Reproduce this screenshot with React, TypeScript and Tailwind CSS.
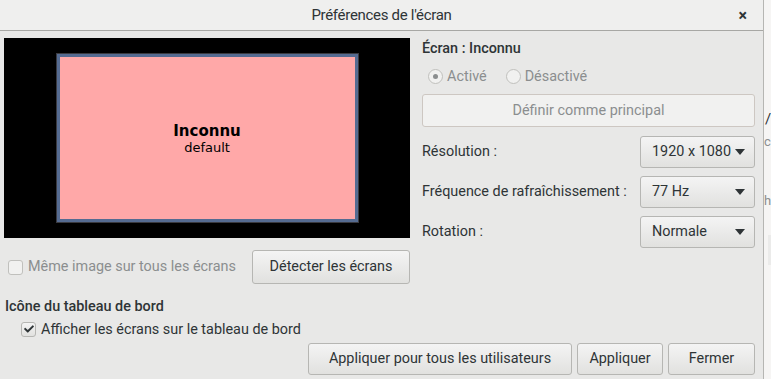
import { FaCheck } from 'react-icons/fa'

const font = { fontFamily: 'Roboto, "Noto Sans", sans-serif' }

function Combo({ value }: { value: string }) {
  return (
    <div className="flex h-[32px] w-[115px] items-center justify-between whitespace-nowrap rounded-[3px] border border-[#b6b6b3] bg-gradient-to-b from-[#f4f4f4] to-[#e1e1df] pl-[11px] pr-[9px] text-[14.4px] text-[#2e3436]">
      <span>{value}</span>
      <svg width="10" height="6" viewBox="0 0 10 6">
        <path d="M0 0h10L5 6z" fill="#2e3436" />
      </svg>
    </div>
  )
}

function Button({ label, w }: { label: string; w: string }) {
  return (
    <div
      className={`flex items-center justify-center whitespace-nowrap rounded-[3px] border border-[#b6b6b3] bg-gradient-to-b from-[#f4f4f4] to-[#e1e1df] text-[14.4px] text-[#2e3436] ${w}`}
    >
      {label}
    </div>
  )
}

export default function App() {
  return (
    <div className="flex h-[379px] w-[771px] overflow-hidden bg-[#f6f5f4]" style={font}>
      <div className="flex h-full w-[764px] flex-col border-r border-[#b6b6b3] bg-[#e8e8e7]">
        {/* Title bar */}
        <div className="relative flex h-[31px] shrink-0 items-center justify-center border-b border-[#a7a7a4] bg-[#efefee] text-[15px] text-[#2e3436]">
          <span className="tracking-[-0.3px]">Préférences de l'écran</span>
          <span className="absolute right-[16px] top-[4px] text-[16px] font-bold">×</span>
        </div>

        <div className="flex flex-col pl-[4px] pr-[8px] pt-[7px] text-[14.4px]">
          <div className="flex">
            {/* Left column */}
            <div className="flex w-[406px] flex-col">
              <div className="flex h-[200px] items-center justify-center bg-black">
                <div className="border border-[#3a3a40] bg-[#556b91] p-[3px]">
                  <div
                    className="flex h-[162px] w-[295px] flex-col items-center justify-center bg-[#ffa8a8] pt-[2px] text-black"
                    style={{ fontFamily: '"DejaVu Sans", sans-serif' }}
                  >
                    <span className="text-[15px] font-bold leading-[18px]">Inconnu</span>
                    <span className="text-[13px] leading-[16px]">default</span>
                  </div>
                </div>
              </div>
              <div className="mt-[12px] flex items-center">
                <span className="ml-[4px] h-[15px] w-[15px] rounded-[3px] border border-[#c0c0bd] bg-[#f1f1f0]" />
                <span className="ml-[5px] text-[#8b8e8f]">Même image sur tous les écrans</span>
                <div className="ml-auto">
                  <Button label="Détecter les écrans" w="w-[158px] h-[34px]" />
                </div>
              </div>
            </div>

            {/* Right column */}
            <div className="ml-[12px] flex w-[333px] flex-col text-[#2e3436]">
              <span className="font-medium">Écran : Inconnu</span>
              <div className="mt-[6px] flex items-center text-[#8b8e8f]">
                <span className="ml-[6px] flex h-[15px] w-[15px] items-center justify-center rounded-full border border-[#c0c0bd] bg-[#f1f1f0]">
                  <span className="h-[5px] w-[5px] rounded-full bg-[#8b8e8f]" />
                </span>
                <span className="ml-[4px]">Activé</span>
                <span className="ml-[19px] h-[15px] w-[15px] rounded-full border border-[#c0c0bd] bg-[#f1f1f0]" />
                <span className="ml-[4px]">Désactivé</span>
              </div>
              <div className="mt-[7px] flex h-[33px] items-center justify-center rounded-[3px] border border-[#cdc7c2] bg-[#f1f1f0] text-[#8b8e8f]">
                Définir comme principal
              </div>
              <div className="mt-[9px] flex items-center justify-between">
                <span>Résolution :</span>
                <Combo value="1920 x 1080" />
              </div>
              <div className="mt-[8px] flex items-center justify-between">
                <span>Fréquence de rafraîchissement :</span>
                <Combo value="77 Hz" />
              </div>
              <div className="mt-[8px] flex items-center justify-between">
                <span>Rotation :</span>
                <Combo value="Normale" />
              </div>
            </div>
          </div>

          <div className="mt-[12px] pl-[1px] font-medium text-[#2e3436]">Icône du tableau de bord</div>
          <div className="mt-[1px] flex items-center text-[#2e3436]">
            <span className="ml-[17px] flex h-[15px] w-[15px] items-center justify-center rounded-[3px] border border-[#b6b6b3] bg-gradient-to-b from-[#f4f4f4] to-[#e1e1df]">
              <FaCheck className="h-[10px] w-[10px] text-[#2e3436]" />
            </span>
            <span className="ml-[5px]">Afficher les écrans sur le tableau de bord</span>
          </div>
          <div className="mt-[3px] flex justify-end gap-[5px]">
            <Button label="Appliquer pour tous les utilisateurs" w="w-[264px] h-[32px]" />
            <Button label="Appliquer" w="w-[86px] h-[32px]" />
            <Button label="Fermer" w="w-[87px] h-[32px]" />
          </div>
        </div>
      </div>
      <div className="relative flex-1 text-[13px] text-[#8b8e8f]">
        <span className="absolute left-[1px] top-[110px] text-[15px] leading-[18px] text-[#2e3436]">/</span>
        <span className="absolute left-[0px] top-[134px] leading-[16px]">c</span>
        <span className="absolute left-[0px] top-[193px] leading-[16px]">h</span>
        <div className="absolute left-[4px] top-[235px] h-[30px] w-[3px] bg-[#ebebea]" />
      </div>
    </div>
  )
}
